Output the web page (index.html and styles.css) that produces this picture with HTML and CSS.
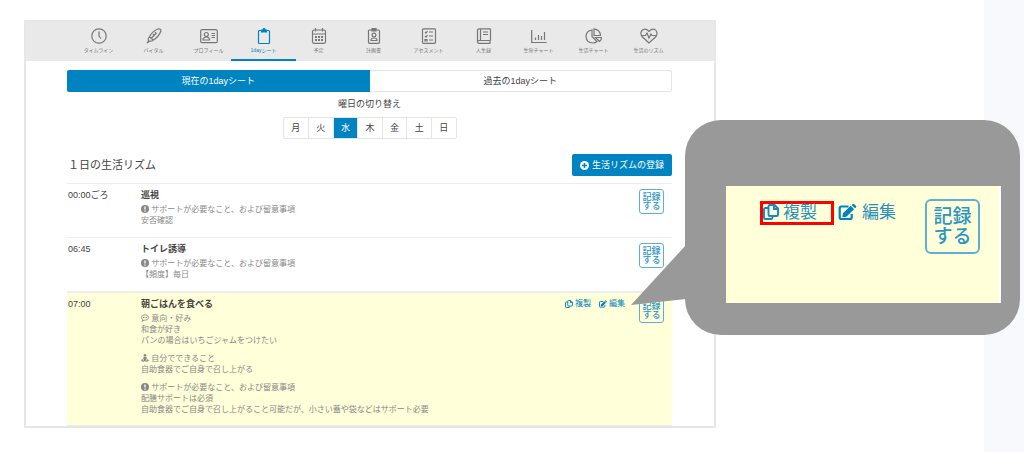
FILE: index.html
```
<!DOCTYPE html>
<html lang="ja">
<head>
<meta charset="utf-8">
<meta name="viewport" content="width=device-width, initial-scale=1">
<title>1dayシート</title>
<link rel="stylesheet" href="styles.css">
</head>
<body>
<svg class="sprite" aria-hidden="true">
  <symbol id="copy" viewBox="0 0 16 16"><path d="M5.500 4H2.300Q1 4 1 5.300v8.400Q1 15 2.300 15h5.900q1.300 0 1.300-1.500V12M6.800 1h4.700L15 4.500v6.200q0 1.300-1.300 1.300H6.800q-1.300 0-1.300-1.300V2.300Q5.500 1 6.800 1zM11 1v4h4" fill="none" stroke="currentColor" stroke-width="1.900"/></symbol>
  <symbol id="edit" viewBox="0 0 18 16"><path d="M10 2.500H2.700Q1.200 2.500 1.200 4v9.500Q1.200 15 2.700 15h9q1.500 0 1.500-1.500V10" fill="none" stroke="currentColor" stroke-width="2.200"/><path d="M12.200 1.800l3.400 3.400-7.700 7.600-4 .5.500-4zM13.200 1l1-.9q.7-.6 1.400 0l1.900 1.900q.6.700 0 1.400l-1 .9z" fill="currentColor"/></symbol>
  <symbol id="info" viewBox="0 0 16 16"><circle cx="8" cy="8" r="8" fill="currentColor"/><path d="M8 3v6M8 11v2.400" stroke="#fff" stroke-width="2.600"/></symbol>
  <symbol id="talk" viewBox="0 0 16 16"><path d="M2 14.500q1.500-1 1.600-2.800Q1 9.800 1 7q0-5.500 7-5.500t7 5.500-7 5.500q-1 0-2-.2-1.900 2-4 2.200z" fill="none" stroke="currentColor" stroke-width="1.600"/><path d="M4 7h2M7 7h2M10 7h2" stroke="currentColor" stroke-width="1.800"/></symbol>
  <symbol id="person" viewBox="0 0 16 16"><circle cx="8" cy="2.500" r="2.500" fill="currentColor"/><path d="M5 5.500h6l.5 5h-1.500V14H6v-3.500H4.500zM0 12.500q2-2 4-2L5 12l-1.500 1H7v2.500Q1 15.500 0 12.500zM16 12.500q-2-2-4-2L11 12l1.500 1H9v2.500q6 0 7-3z" fill="currentColor"/></symbol>
  <symbol id="plus" viewBox="0 0 16 16"><circle cx="8" cy="8" r="8" fill="#fff"/><path d="M8 3.500v9M3.500 8h9" stroke="#0083c1" stroke-width="2.600"/></symbol>
</svg>
<div class="page">
  <main class="content">
    <div class="card">
      <nav class="tabs" aria-label="メニュー">
        <a class="tab" href="#"><svg viewBox="0 0 16 16"><circle cx="8" cy="8" r="7.200"/><path d="M8 3.500V8l2 2.500"/></svg>タイムライン</a>
        <a class="tab" href="#"><svg viewBox="0 0 16 16"><path d="M1 15l1.500-2-.2-2.200Q6 3 12 1q3-.5 3 1.800Q13 9 6 13l-2.500.2zM4 9l3 3M5 10.500L10.500 5M7 6l1 1M9 4l1 1"/></svg>バイタル</a>
        <a class="tab" href="#"><svg class="wide" viewBox="0 0 18 16"><rect x=".7" y="1.700" width="16.600" height="13" rx="1.500"/><circle cx="6.300" cy="6.500" r="2"/><path d="M3 12V11q1-2 3.300-2t3.300 2v1zM11.500 5.500h3.500M11.500 7.500h3.500M11.500 9.500h3.500"/></svg>プロフィール</a>
        <a class="tab active" href="#" aria-current="page"><svg viewBox="0 0 16 16"><rect x="2.500" y="2.500" width="11" height="13" rx="1"/><path d="M5.500 2H7q0-1.500 1-1.500T9 2h1.500v2h-5z" fill="currentColor"/></svg>1dayシート</a>
        <a class="tab" href="#"><svg viewBox="0 0 16 16"><rect x="1.500" y="2" width="13" height="13.300" rx="1.500"/><path d="M1.500 6h13M4.500 0v3.500M11.500 0v3.500"/><path d="M4 9h8M4 12h8" stroke-width="2" stroke-dasharray="2 1"/></svg>予定</a>
        <a class="tab" href="#"><svg viewBox="0 0 16 16"><rect x="2.500" y="2" width="11" height="13.300" rx="1"/><path d="M6 0h4v3H6z" fill="currentColor"/><circle cx="8" cy="7" r="1.900"/><path d="M5 12.500v-1Q5.500 10 8 10t3 1.500v1z"/></svg>計画書</a>
        <a class="tab" href="#"><svg viewBox="0 0 16 16"><rect x="1.500" y=".8" width="13" height="14.500" rx="1"/><path d="M4 4l1 1 1.500-2M8 4h4M4 8l1 1 1.500-2M8 8h4M4 11.500h2V13H4zM8 12h4"/></svg>アセスメント</a>
        <a class="tab" href="#"><svg viewBox="0 0 16 16"><path d="M14.500 12.500H3q-1.500 0-1.500 1.400T3 15.300h11.500M14 12.500v2.800M14.500.8v11.700M14.500.8H3Q1.500.8 1.500 2.300V14M4.500.8v11.700M7 4h5M7 6.500h5"/></svg>人生録</a>
        <a class="tab" href="#"><svg viewBox="0 0 16 16"><path d="M.7 2v12.500h15M4.500 12V9.500M7.500 12V7M10.500 12V8M13.500 12V4"/></svg>生命チャート</a>
        <a class="tab" href="#"><svg class="wide" viewBox="0 0 18 16"><path d="M7 2Q1 3 1 8.500 1.500 15 8 15q2.500 0 4-1.500L7 8.500zM9 .8v6.700h6.500Q15 1.500 9 .8zM10.500 9.500h6q0 2.500-2 4z"/></svg>生活チャート</a>
        <a class="tab" href="#"><svg class="wide" viewBox="0 0 18 16"><path d="M9 15L2 8.500Q-.3 5 2 2.500T7.500 2L9 3.500 10.500 2Q14 0 16 2.500T16 8.500zM1.500 7.500h4L7 5l2 5 2-4 1 1.500h4.500"/></svg>生活のリズム</a>
      </nav>
      <section class="sheet">
        <div class="switch">
          <button class="switch-item selected" type="button">現在の1dayシート</button>
          <button class="switch-item" type="button">過去の1dayシート</button>
        </div>
        <p class="caption">曜日の切り替え</p>
        <div class="week">
          <button type="button">月</button><button type="button">火</button><button type="button" class="selected">水</button><button type="button">木</button><button type="button">金</button><button type="button">土</button><button type="button">日</button>
        </div>
        <header class="heading">
          <h1>１日の生活リズム</h1>
          <button class="add" type="button"><svg><use href="#plus"/></svg>生活リズムの登録</button>
        </header>
        <article class="row">
          <time>00:00ごろ</time>
          <div class="detail">
            <h2>巡視</h2>
            <p><svg><use href="#info"/></svg> サポートが必要なこと、および留意事項<br>安否確認</p>
          </div>
          <button class="record" type="button">記録<br>する</button>
        </article>
        <article class="row">
          <time>06:45</time>
          <div class="detail">
            <h2>トイレ誘導</h2>
            <p><svg><use href="#info"/></svg> サポートが必要なこと、および留意事項<br>【頻度】毎日</p>
          </div>
          <button class="record" type="button">記録<br>する</button>
        </article>
        <article class="row highlight">
          <time>07:00</time>
          <div class="detail">
            <h2>朝ごはんを食べる</h2>
            <p><svg><use href="#talk"/></svg> 意向・好み<br>和食が好き<br>パンの場合はいちごジャムをつけたい</p>
            <p><svg><use href="#person"/></svg> 自分でできること<br>自助食器でご自身で召し上がる</p>
            <p><svg><use href="#info"/></svg> サポートが必要なこと、および留意事項<br>配膳サポートは必須<br>自助食器でご自身で召し上がること可能だが、小さい蓋や袋などはサポート必要</p>
          </div>
          <div class="actions">
            <a href="#"><svg><use href="#copy"/></svg>複製</a>
            <a href="#"><svg><use href="#edit"/></svg>編集</a>
          </div>
          <button class="record" type="button">記録<br>する</button>
        </article>
      </section>
    </div>
  </main>
  <div class="gutter"></div>
  <aside class="callout">
    <svg class="tail" viewBox="0 0 56 56" aria-hidden="true"><path d="M56 0L1 60 56 54z"/></svg>
    <div class="closeup">
      <a class="marked" href="#"><svg><use href="#copy"/></svg>複製</a>
      <a class="plain" href="#"><svg><use href="#edit"/></svg>編集</a>
      <button class="record large" type="button">記録<br>する</button>
    </div>
  </aside>
</div>
</body>
</html>
```
FILE: styles.css
```
* { box-sizing: border-box; }

body {
  margin: 0;
  background: #fff;
  color: #444;
  font-family: "Liberation Sans", "Noto Sans CJK JP", sans-serif;
  font-size: 9px;
  line-height: 12px;
}

h1, h2, p { margin: 0; }
a { color: inherit; text-decoration: none; }
button {
  padding: 0;
  border: 0;
  background: none;
  color: inherit;
  font: inherit;
}

.sprite { position: absolute; width: 0; height: 0; }

.page {
  position: relative;
  display: grid;
  grid-template-columns: 1fr 40px;
  align-items: start;
  min-height: 100vh;
}
.gutter { align-self: stretch; background: #f8f9fc; }
.content { padding: 20px 268px 24px 24px; }

.card {
  border: 2px solid #e6e6e6;
  background: #fff;
}

.tabs {
  display: grid;
  grid-template-columns: repeat(11, 1fr);
  padding: 0 38px 0 45px;
  background: #e9e9e9;
}
.tab {
  position: relative;
  display: flex;
  flex-direction: column;
  align-items: center;
  gap: 3px;
  height: 39px;
  padding-top: 6px;
  color: #777;
  font-size: 5px;
  line-height: 6px;
  white-space: nowrap;
}
.tab svg {
  width: 16px;
  height: 16px;
  fill: none;
  stroke: currentColor;
  stroke-width: 1.2;
}
.tab svg.wide { width: 18px; }
.tab.active { color: #0083c1; }
.tab.active::after {
  content: "";
  position: absolute;
  right: -5px;
  bottom: 0;
  left: -5px;
  height: 2px;
  background: #0083c1;
}

.sheet { padding: 9px 42px 0 41px; }

.switch {
  display: grid;
  grid-template-columns: 1fr 1fr;
  border: 1px solid #e4e4e4;
  border-radius: 2px;
}
.switch-item { height: 20px; }
.switch-item.selected {
  margin: -1px 0 -1px -1px;
  height: 22px;
  border-radius: 2px 0 0 2px;
}
.selected { background: #0083c1; color: #fff; }

.caption { margin-top: 6px; text-align: center; }

.week {
  display: grid;
  grid-template-columns: repeat(7, 1fr);
  width: 174px;
  margin: 7px auto 0;
  border: 1px solid #e4e4e4;
  border-radius: 2px;
}
.week button { height: 20px; }
.week button + button { border-left: 1px solid #e4e4e4; }

.heading {
  display: flex;
  align-items: center;
  justify-content: space-between;
  margin: 15px 0 7px;
}
h1 { padding-left: 1px; font-size: 11px; font-weight: 400; }
.add {
  display: flex;
  align-items: center;
  gap: 3px;
  height: 22px;
  padding: 0 8px;
  border-radius: 2px;
  background: #0083c1;
  color: #fff;
}
.add svg { width: 9px; height: 9px; }

.row {
  display: flex;
  align-items: flex-start;
  min-height: 54px;
  padding: 5px 8px 4px 1px;
  border-top: 1px solid #eee;
}
.row time { flex: 0 0 73px; }
.row .record { flex: none; }
.detail { flex: 1; color: #888; }
h2 { color: #444; font-size: 9px; font-weight: 700; line-height: 12px; }
.detail p { margin: 3px 0 7px; font-size: 8px; line-height: 11px; white-space: nowrap; }
.detail svg { width: 8px; height: 8px; vertical-align: -1px; }

.highlight {
  padding-bottom: 3px;
  border-top: 2px solid #eee;
  border-bottom: 1px solid #eee;
  background: #ffffd9;
}

.record {
  width: 25px;
  height: 25px;
  border: 1px solid #5eb0d3;
  border-radius: 3px;
  color: #2b95c5;
  font-weight: 500;
  line-height: 9px;
}

.actions {
  display: flex;
  gap: 8px;
  padding-right: 14px;
  color: #0083c1;
  font-size: 8px;
}
.actions a { display: flex; align-items: center; gap: 2px; }
.actions svg { width: 8px; height: 8px; }

.callout {
  position: absolute;
  top: 120px;
  right: 4px;
  width: 335px;
  padding: 66px 19px 32px 41px;
  border-radius: 36px;
  background: #999;
}
.tail {
  position: absolute;
  top: 125px;
  left: -55px;
  width: 56px;
  height: 56px;
  overflow: visible;
  fill: #999;
}
.closeup {
  display: flex;
  align-items: flex-start;
  height: 117px;
  padding: 13px 19px 0 34px;
  border-right: 2px solid #fff;
  background: #ffffd9;
  color: #2b8fbd;
  font-size: 17px;
  line-height: 18px;
}
.closeup a { display: flex; align-items: center; }
.closeup svg { width: 16px; height: 16px; margin-bottom: 2px; }
.marked {
  gap: 4px;
  width: 74px;
  margin-top: 2px;
  border: 3px solid #f00;
}
.plain { gap: 5px; margin: 5px 0 0 4px; }
.closeup .plain svg { width: 19px; color: #0083c1; }
.marked svg { color: #1689c0; }
.record.large {
  width: 55px;
  height: 55px;
  margin-left: auto;
  border-width: 2px;
  border-radius: 6px;
  font-size: 19px;
  line-height: 20px;
}
```
